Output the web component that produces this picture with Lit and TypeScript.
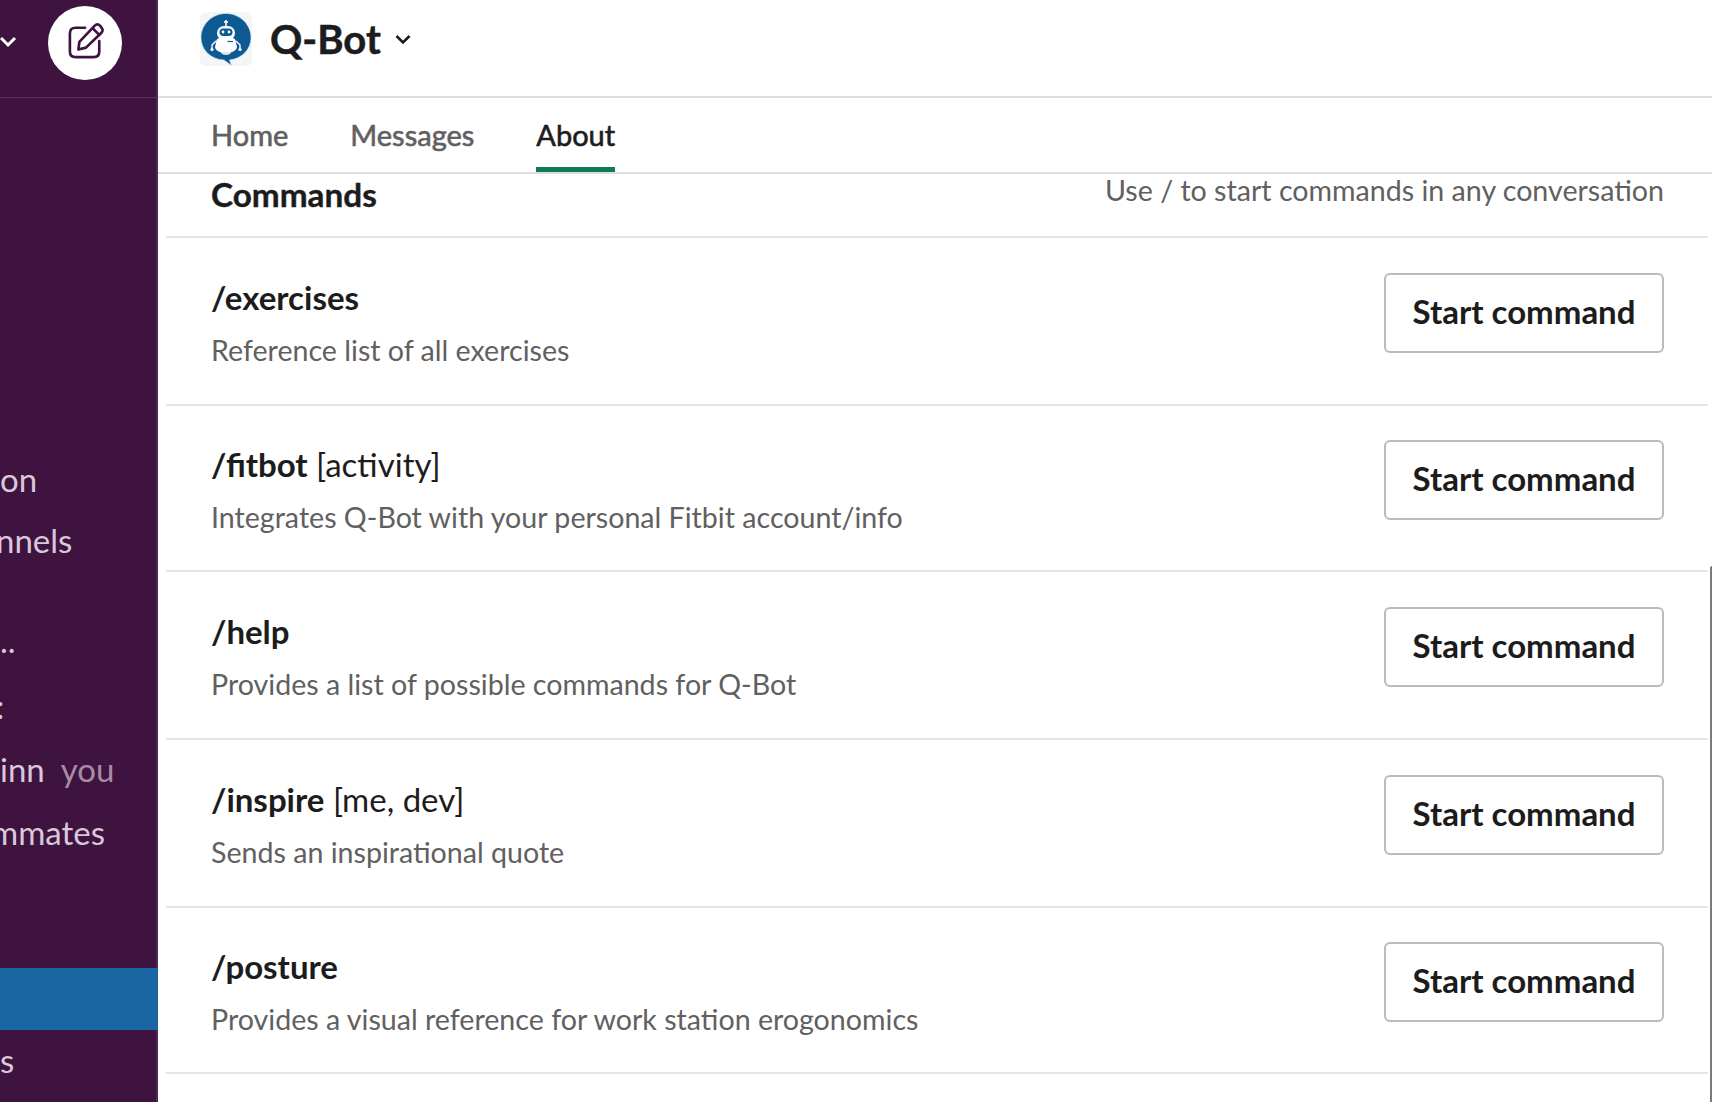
import { LitElement, html, css, svg } from "lit";
import { customElement } from "lit/decorators.js";

const commands = [
  { name: "/exercises", args: "", desc: "Reference list of all exercises", tall: true },
  { name: "/fitbot", args: "[activity]", desc: "Integrates Q-Bot with your personal Fitbit account/info", tall: false },
  { name: "/help", args: "", desc: "Provides a list of possible commands for Q-Bot", tall: true },
  { name: "/inspire", args: "[me, dev]", desc: "Sends an inspirational quote", tall: true },
  { name: "/posture", args: "", desc: "Provides a visual reference for work station erogonomics", tall: false },
];

const botIcon = svg`<svg class="bot" viewBox="0 0 52 54" width="52" height="54">
  <rect width="52" height="54" rx="6" fill="#f3f5f6"/>
  <path d="M26 1.500C12 1.500 1 12.500 1 25.500C1 38 11 47.500 24 48L31.500 53.500L29.500 48C42.500 46.500 51 37 51 25.500C51 12.500 40 1.500 26 1.500Z" fill="#0d5a93" stroke="#d6e6f0" stroke-width=".6"/>
  <path d="M26 8V14M24 10H28" stroke="#fff" stroke-width="1.600"/>
  <rect x="17" y="14" width="18" height="14" rx="7" fill="#fff"/>
  <path d="M16 31C16 26 19 25 26 25C33 25 36 26 36 31L37 35C37 38 32 41 26 41C20 41 15 38 15 35Z" fill="#fff"/>
  <rect x="19.500" y="16.500" width="13" height="7.500" rx="3.700" fill="#0d5a93"/>
  <circle cx="23" cy="20" r="1.400" fill="#fff"/><circle cx="29" cy="20" r="1.400" fill="#fff"/>
  <path d="M27.500 29.500H33" stroke="#0d5a93" stroke-width="1.200"/>
  <path d="M16 29L12 33V37M36 29L40 33V37" stroke="#fff" stroke-width="1.400" fill="none"/>
  <circle cx="12" cy="37.500" r="1.600" fill="#fff"/><circle cx="40" cy="37.500" r="1.600" fill="#fff"/>
  <path d="M21 40H31V41C29 43.500 23 43.500 21 41Z" fill="#dfe8ef"/>
</svg>`;

@customElement("app-root")
export class AppRoot extends LitElement {
  static styles = css`
    :host {
      display: flex;
      width: 1712px;
      height: 1102px;
      overflow: hidden;
      position: relative;
      background: #fff;
      color: #1d1c1d;
      font-family: Lato, "Liberation Sans", sans-serif;
    }
    .side {
      width: 156px;
      flex: none;
      background: #3f1340;
      border-right: 2px solid #4d2a51;
      display: flex;
      flex-direction: column;
      color: #d9c8d9;
      font-size: 33px;
    }
    .side-top {
      height: 97px;
      flex: none;
      border-bottom: 1px solid #5a335e;
      display: flex;
      align-items: center;
      justify-content: space-between;
      padding-right: 36px;
      margin-right: -2px;
    }
    .chev { display: block; margin-top: -14px; }
    .compose {
      width: 74px;
      height: 74px;
      margin-top: -12px;
      border-radius: 50%;
      background: #fff;
      display: flex;
      align-items: center;
      justify-content: center;
    }
    .compose svg { margin: -4px -2px 0 0; }
    .items { display: flex; flex-direction: column; padding-top: 351px; }
    .item { height: 61px; line-height: 61px; white-space: nowrap; overflow: hidden; flex: none; }
    .item.gap { margin-top: 39px; }
    .item.colon { margin-top: 4px; height: 63px; line-height: 63px; }
    .item.colon span { margin-left: -4px; }
    .item.inn { height: 63px; line-height: 63px; }
    .item.mm { height: 62px; line-height: 62px; }
    .item.nn span { margin-left: -4px; }
    .item.mm span { margin-left: -9px; }
    .item span { display: inline-block; }
    .item .you { color: #a78ca8; margin-left: 16px; }
    .active { height: 62px; flex: none; margin-top: 105px; margin-right: -2px; background: #1a66a3; }
    .main { flex: 1; min-width: 0; display: flex; flex-direction: column; }
    .head {
      height: 98px;
      box-sizing: border-box;
      flex: none;
      border-bottom: 2px solid #dddddd;
      display: flex;
      align-items: flex-start;
      padding: 12px 0 0 42px;
    }
    .title {
      font-size: 40px;
      font-weight: 700;
      line-height: 54px;
      margin-left: 18px;
      -webkit-text-stroke: 0.5px #1d1c1d;
    }
    .title-chev { margin: 22px 0 0 14px; }
    .tabs {
      height: 76px;
      box-sizing: border-box;
      flex: none;
      border-bottom: 2px solid #dddddd;
      display: flex;
      gap: 62px;
      padding-left: 53px;
      font-size: 29px;
      color: #616061;
      -webkit-text-stroke: 0.6px currentColor;
    }
    .tab { line-height: 73px; height: 74px; box-sizing: border-box; }
    .tab.on { color: #1d1c1d; border-bottom: 5px solid #0f7a5a; -webkit-text-stroke-color: #1d1c1d; }
    .scroll { flex: 1; min-height: 0; overflow: hidden; padding: 0 4px 0 8px; }
    .sec {
      height: 65px;
      box-sizing: border-box;
      margin-top: -1px;
      border-bottom: 2px solid #e4e4e4;
      display: flex;
      justify-content: space-between;
      padding: 0 44px 0 45px;
    }
    .sec h2 {
      margin: -2px 0 0;
      font-size: 33.300px;
      font-weight: 700;
      line-height: 46px;
      -webkit-text-stroke: 0.4px #1d1c1d;
    }
    .sec p { margin: 0; font-size: 28.600px; color: #616061; line-height: 34px; }
    .row {
      height: 166px;
      box-sizing: border-box;
      border-bottom: 2px solid #e4e4e4;
      display: flex;
      align-items: center;
      justify-content: space-between;
      padding: 0 44px 0 45px;
    }
    .row.tall { height: 168px; }
    .txt { padding-top: 5px; }
    .name { font-size: 33px; line-height: 50px; font-weight: 400; }
    .name b { font-weight: 700; }
    .desc { font-size: 28.600px; line-height: 51px; margin-top: 3px; color: #616061; }
    .btn {
      width: 280px;
      height: 80px;
      margin-bottom: 16px;
      box-sizing: border-box;
      border: 2px solid #bbbbbb;
      border-radius: 6px;
      background: #fff;
      color: #1d1c1d;
      font: 700 33px Lato, "Liberation Sans", sans-serif;
      padding: 0 0 4px;
    }
    .sb {
      position: absolute;
      right: 0;
      top: 566px;
      bottom: 0;
      width: 2px;
      background: #7a7a7a;
      border-radius: 2px 0 0 0;
    }
  `;

  render() {
    return html`
      <aside class="side">
        <div class="side-top">
          <svg class="chev" width="18" height="14" viewBox="0 0 18 14"><path d="M1 3L8 10L15 3" fill="none" stroke="#fff" stroke-width="3"/></svg>
          <div class="compose">
            <svg width="36" height="36" viewBox="0 0 38 38" fill="none" stroke="#3f1340" stroke-width="2.800" stroke-linecap="round" stroke-linejoin="round">
              <path d="M18 5H8C4 5 2 7 2 11V30C2 34 4 36 8 36H27C31 36 33 34 33 30V19"/>
              <path d="M12 20L28 3C30 1 32 1 34 3L35 4.500C37 6.500 37 8.500 35 10.500L19 26L11 28Z"/>
              <path d="M26 5.500L33 12.500"/>
            </svg>
          </div>
        </div>
        <div class="items">
          <div class="item">on</div>
          <div class="item nn"><span>nnels</span></div>
          <div class="item gap">..</div>
          <div class="item colon"><span>:</span></div>
          <div class="item inn">inn<span class="you">you</span></div>
          <div class="item mm"><span>mmates</span></div>
          <div class="active"></div>
          <div class="item">s</div>
        </div>
      </aside>
      <main class="main">
        <div class="head">
          ${botIcon}
          <div class="title">Q-Bot</div>
          <svg class="title-chev" width="16" height="12" viewBox="0 0 16 12"><path d="M1.500 2L8 8.500L14.500 2" fill="none" stroke="#1d1c1d" stroke-width="2.600"/></svg>
        </div>
        <nav class="tabs">
          <div class="tab">Home</div>
          <div class="tab">Messages</div>
          <div class="tab on">About</div>
        </nav>
        <div class="scroll">
          <div class="sec">
            <h2>Commands</h2>
            <p>Use / to start commands in any conversation</p>
          </div>
          ${commands.map(
            (c) => html`<div class="row ${c.tall ? "tall" : ""}">
              <div class="txt">
                <div class="name"><b>${c.name}</b>${c.args ? ` ${c.args}` : ""}</div>
                <div class="desc">${c.desc}</div>
              </div>
              <button class="btn">Start command</button>
            </div>`
          )}
        </div>
      </main>
      <div class="sb"></div>
    `;
  }
}
